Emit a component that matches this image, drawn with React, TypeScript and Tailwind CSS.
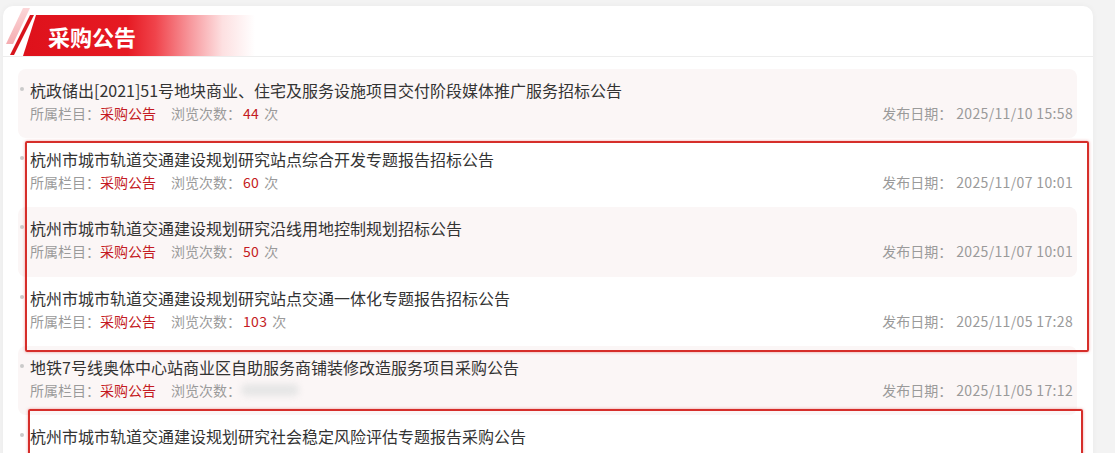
import React from "react";

type Item = { title: string; views: string | null; date: string };

const items: Item[] = [
  { title: "杭政储出[2021]51号地块商业、住宅及服务设施项目交付阶段媒体推广服务招标公告", views: "44", date: "2025/11/10 15:58" },
  { title: "杭州市城市轨道交通建设规划研究站点综合开发专题报告招标公告", views: "60", date: "2025/11/07 10:01" },
  { title: "杭州市城市轨道交通建设规划研究沿线用地控制规划招标公告", views: "50", date: "2025/11/07 10:01" },
  { title: "杭州市城市轨道交通建设规划研究站点交通一体化专题报告招标公告", views: "103", date: "2025/11/05 17:28" },
  { title: "地铁7号线奥体中心站商业区自助服务商铺装修改造服务项目采购公告", views: null, date: "2025/11/05 17:12" },
  { title: "杭州市城市轨道交通建设规划研究社会稳定风险评估专题报告采购公告", views: "88", date: "2025/11/04 09:30" },
];

function Row({ item, shaded }: { item: Item; shaded: boolean }) {
  return (
    <div
      className={`relative h-[69.2px] shrink-0 rounded-[8px] pl-[12px] pr-[4px] pt-[11px] ${
        shaded ? "bg-[#fbf6f6]" : "bg-white"
      }`}
    >
      <span className="absolute left-[2px] top-[18px] h-[4px] w-[4px] rounded-full bg-[#cacaca]" />
      <div className="text-[16px] leading-[20px] text-[#333333] whitespace-nowrap">{item.title}</div>
      <div className="mt-[4px] flex items-center justify-between text-[14px] leading-[19px] text-[#9a9a9a]">
        <div className="flex items-center whitespace-nowrap">
          <span>所属栏目：</span>
          <span className="text-[#c41a22]">采购公告</span>
          <span className="ml-[15px]">浏览次数：</span>
          {item.views ? (
            <>
              <span className="ml-[2px] text-[#c41a22] tracking-[0.3px]">{item.views}</span>
              <span className="ml-[5px]">次</span>
            </>
          ) : (
            <span className="ml-[0px] h-[12px] w-[58px] rounded-full bg-[#e6e6e6] blur-[3px]" />
          )}
        </div>
        <div className="whitespace-nowrap">
          <span>发布日期：</span>
          <span className="ml-[4px] tracking-[0.35px]">{item.date}</span>
        </div>
      </div>
    </div>
  );
}

export default function App() {
  return (
    <div
      className="h-[453px] overflow-hidden bg-[#f3f3f3] pl-[3px] pr-[22px] pt-[6px]"
      style={{ fontFamily: '"Noto Sans CJK SC", "Noto Sans", sans-serif' }}
    >
      <div className="relative h-[600px] rounded-[10px] bg-white shadow-[0_0_6px_rgba(0,0,0,0.04)]">
        {/* header */}
        <div className="relative h-[51px] border-b border-[#ededed]">
          <svg className="absolute left-0 top-0" width="40" height="52" viewBox="0 0 40 52">
            <defs>
              <linearGradient id="pk" x1="0" y1="0" x2="0" y2="1">
                <stop offset="0" stopColor="#fcd6d8" />
                <stop offset="1" stopColor="#f5adb1" />
              </linearGradient>
            </defs>
            <polygon points="20,2 27,2 10,38 3,38" fill="url(#pk)" />
            <polygon points="27,9 31,9 11,49 7,49" fill="#d7141c" />
          </svg>
          <div
            className="absolute left-[20px] top-[9px] flex h-[41px] w-[232px] items-center pl-[25px] [clip-path:polygon(13px_0,100%_0,100%_100%,0_100%)]"
            style={{
              background:
                "linear-gradient(90deg, #de111b 0%, #e61a23 45%, #f0434b 57%, #f7979c 72%, #fde0e1 86%, rgba(255,255,255,0) 100%)",
            }}
          >
            <span className="text-[22px] font-bold leading-none text-white">采购公告</span>
          </div>
        </div>
        {/* list */}
        <div className="relative">
          <div className="ml-[15px] mr-[16px] flex flex-col pt-[12px]">
            {items.map((it, i) => (
              <Row key={i} item={it} shaded={i % 2 === 0} />
            ))}
          </div>
          <div className="pointer-events-none absolute left-[22px] top-[84px] h-[211px] w-[1064px] rounded-[2px] border-2 border-[#d62e2a] shadow-[0_0_3px_rgba(220,60,60,0.5)]" />
          <div className="pointer-events-none absolute left-[25px] top-[352px] h-[120px] w-[1055px] rounded-[2px] border-2 border-[#d62e2a] shadow-[0_0_3px_rgba(220,60,60,0.5)]" />
        </div>
      </div>
    </div>
  );
}
